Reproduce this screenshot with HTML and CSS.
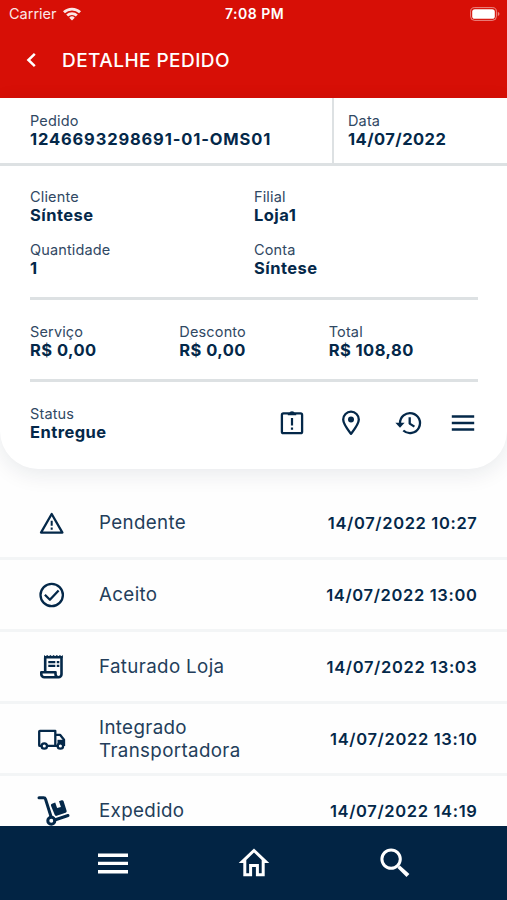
FILE: index.html
```html
<!DOCTYPE html>
<html lang="pt-BR">
<head>
<meta charset="utf-8">
<meta name="viewport" content="width=device-width, initial-scale=1">
<title>Detalhe Pedido</title>
<link rel="stylesheet" href="styles.css">
</head>
<body>
<div class="app">
  <header class="header">
    <div class="statusbar">
      <div class="carrier"><span>Carrier</span>
        <svg class="wifi" viewBox="0 0 18 14"><path d="M0 4.3A13 13 0 0 1 18 4.3L16.1 6.3A10.3 10.3 0 0 0 1.9 6.3ZM3.2 7.6A8.4 8.4 0 0 1 14.8 7.6L12.9 9.5A5.7 5.7 0 0 0 5.1 9.5ZM6.2 10.7A4 4 0 0 1 11.8 10.7L9 13.6Z"/></svg>
      </div>
      <div class="clock">7:08 PM</div>
      <svg class="battery" viewBox="0 0 30 14"><rect class="shell" x=".6" y=".6" width="25.8" height="12.8" rx="4"/><rect x="2.2" y="2.2" width="22.6" height="9.6" rx="2.6"/><path class="tip" d="M27.8 4.8Q31.2 7 27.8 9.2Z"/></svg>
    </div>
    <div class="titlebar">
      <svg class="back" viewBox="0 0 12 18"><path d="M9.8 2.8 3.4 9l6.4 6.2"/></svg>
      <h1>DETALHE PEDIDO</h1>
    </div>
  </header>

  <section class="card">
    <div class="order">
      <div class="field order-id"><span class="label">Pedido</span><strong class="long">1246693298691-01-OMS01</strong></div>
      <div class="field order-date"><span class="label">Data</span><strong>14/07/2022</strong></div>
    </div>
    <div class="block info">
      <div class="field"><span class="label">Cliente</span><strong>Síntese</strong></div>
      <div class="field"><span class="label">Filial</span><strong>Loja1</strong></div>
      <div class="field"><span class="label">Quantidade</span><strong>1</strong></div>
      <div class="field"><span class="label">Conta</span><strong>Síntese</strong></div>
    </div>
    <div class="block totals">
      <div class="field"><span class="label">Serviço</span><strong>R$ 0,00</strong></div>
      <div class="field"><span class="label">Desconto</span><strong>R$ 0,00</strong></div>
      <div class="field"><span class="label">Total</span><strong>R$ 108,80</strong></div>
    </div>
    <div class="state">
      <div class="field"><span class="label">Status</span><strong>Entregue</strong></div>
      <div class="actions">
        <svg viewBox="0 0 30 30"><rect class="line" x="4.900" y="5.400" width="20.200" height="19.800" rx="1.500"/><path d="M10.800 5.500h1.300a3 3 0 0 1 5.800 0h1.300v1.800h-8.400ZM13.900 10h2.200v7.400h-2.200ZM13.900 19.400h2.200v2.300h-2.200Z"/></svg>
        <svg viewBox="0 0 30 30"><path class="line" d="M15 25.800C10.500 20 7.200 16 7.200 11.500a7.800 7.800 0 0 1 15.600 0C22.800 16 19.500 20 15 25.800Z"/><circle cx="15" cy="11.500" r="3"/></svg>
        <svg viewBox="0 0 30 30"><path class="line" d="M6 15.400A10 10 0 1 1 9.300 22.500M15.700 9.300v6.300l4.700 3"/><path d="M1.400 14.800h9.200L6 19.700Z"/></svg>
        <svg viewBox="0 0 30 30"><path d="M3.800 7.300h22.400v2.400H3.800ZM3.800 13.800h22.400v2.400H3.800ZM3.800 20.300h22.400v2.400H3.800Z"/></svg>
      </div>
    </div>
  </section>

  <ul class="timeline">
    <li><svg viewBox="0 0 36 36"><path class="line" d="M17.700 9 28.400 27.600H7Z"/><path d="M16.700 15.800h2v5h-2ZM16.700 22.500h2v2.300h-2Z"/></svg><span>Pendente</span><time>14/07/2022 10:27</time></li>
    <li><svg viewBox="0 0 36 36"><circle class="line" cx="17.700" cy="18" r="11.200"/><path class="line" d="m10.900 17.800 5 5 8.700-9.300"/></svg><span>Aceito</span><time>14/07/2022 13:00</time></li>
    <li><svg viewBox="0 0 36 36"><path class="line heavy" d="M11.200 23V8.500M10.500 8.300H28.500M27.500 8.500v16.700a3 3 0 0 1-3 3H10.300a3 3 0 0 1-3-3v-2H21.500v2a3 3 0 0 0 3 3"/><path d="M10 9V6l1.600 1.300L13.200 6l1.600 1.300L16.400 6 18 7.300 19.600 6l1.600 1.300L22.800 6l1.600 1.300L26 6l1.300 1.300L28.800 6v3ZM14.300 12h7v2.200h-7ZM22.800 12h2.500v2.200h-2.500ZM14.300 15.800h7V18h-7ZM22.800 15.800h2.500V18h-2.500Z"/></svg><span>Faturado Loja</span><time>14/07/2022 13:03</time></li>
    <li><svg viewBox="0 0 36 36"><path class="line" d="M8.300 24.900H5.900a.7.700 0 0 1-.7-.7V10.600a.7.700 0 0 1 .7-.7h15.400v15H13M26 24.900h-5M21.300 13.800h4.700l4 5v6.100"/><path d="M23.500 18.800H31v5.200h-7.500Z"/><circle class="line fill" cx="10.300" cy="25" r="2.700"/><circle class="line fill" cx="26.400" cy="25" r="2.700"/></svg><span>Integrado<br>Transportadora</span><time>14/07/2022 13:10</time></li>
    <li><svg viewBox="0 0 36 36"><path class="cart" d="M5 4.700h4.600a2 2 0 0 1 1.900 1.400l5.500 17.400M20.700 27 34 22.500"/><circle class="cart" cx="17.300" cy="27.700" r="3.500"/><path d="m18 10.700 3.200-1.200 1.900 5.600 3.800-1.200L25 8.300l2.600-1a1.600 1.600 0 0 1 2 1l3 9.500a1.600 1.600 0 0 1-1 2l-8.900 3a1.600 1.600 0 0 1-2-1L17 12.700a1.600 1.600 0 0 1 1-2Z"/></svg><span>Expedido</span><time>14/07/2022 14:19</time></li>
  </ul>

  <nav class="tabs">
    <svg viewBox="0 0 36 36"><path d="M3 8.500h30v3.400H3ZM3 16.700h30v3.400H3ZM3 25h30v3.400H3Z"/></svg>
    <svg viewBox="0 0 36 36"><path d="M18 3.500 33.300 18h-4.600v13.200H19.900v-9.200h-3.800v9.200H7.300V18H2.700ZM18 7.600l-7.700 7.300v13.300h2.800V19h9.800v9.200h2.800V14.900Z"/></svg>
    <svg viewBox="0 0 36 36"><circle class="lens" cx="14.100" cy="14.100" r="9.200"/><path d="m20.500 22.900 2.400-2.400 9.500 8.600-2.900 2.900Z"/></svg>
  </nav>
</div>
</body>
</html>
```

FILE: styles.css
```css
* { box-sizing: border-box; }
body { margin: 0; background: #fefefe; color: #042849; font-family: Inter, sans-serif; }
h1, ul { margin: 0; padding: 0; }
svg { display: block; flex: none; fill: currentColor; }
.app { height: 900px; display: flex; flex-direction: column; overflow: hidden; }

.header { flex: none; height: 98px; background: #d70f06; color: #fff; }
.statusbar { height: 27px; padding: 0 7px 0 9px; display: grid; grid-template-columns: 1fr auto 1fr; align-items: center; font-size: 14.5px; }
.carrier { display: flex; align-items: center; gap: 6px; opacity: .9; }
.wifi { width: 18px; height: 14px; }
.clock { font-weight: 600; font-size: 14px; letter-spacing: .5px; }
.battery { width: 30px; height: 14px; justify-self: end; }
.battery .shell { fill: none; stroke: #fff; stroke-opacity: .5; stroke-width: 1; }
.battery .tip { opacity: .5; }
.titlebar { height: 66px; padding-left: 25px; display: flex; align-items: center; gap: 25px; }
.back { width: 12px; height: 18px; fill: none; stroke: #fff; stroke-width: 2.5; }
h1 { font-size: 19px; font-weight: 500; line-height: 24px; letter-spacing: .45px; padding-top: 1px; }

.card { position: relative; z-index: 1; flex: none; height: 371px; background: #fff; border-radius: 0 0 38px 38px; box-shadow: 0 5px 22px rgba(10, 30, 50, .09); }
.order { height: 68px; display: flex; border-bottom: 3px solid #dde1e3; }
.field { display: flex; flex-direction: column; }
.label { font-size: 14.5px; line-height: 19px; letter-spacing: .15px; color: #304863; }
strong { font-size: 16.500px; line-height: 19px; font-weight: 700; letter-spacing: .45px; }
.long { letter-spacing: .85px; }
.order-id { width: 334px; padding: 13px 0 0 30px; border-right: 2px solid #dde1e3; }
.order-date { padding: 13px 0 0 14px; }
.block { margin: 0 29px 0 30px; border-bottom: 3px solid #dde1e3; }
.info { height: 134px; padding-top: 21px; display: grid; grid-template-columns: 1fr 1fr; grid-auto-rows: 53px; }
.totals { height: 82px; padding-top: 22px; display: grid; grid-template-columns: repeat(3, 1fr); }
.state { padding: 22px 29px 0 30px; display: flex; justify-content: space-between; }
.actions { display: flex; gap: 28.500px; }
.actions svg { width: 30px; height: 30px; margin-top: 4px; }
.actions svg:last-child { margin-left: -4.500px; }
.line { fill: none; stroke: currentColor; stroke-width: 2.300; stroke-linejoin: round; }
.line.fill { fill: #fff; }
.line.heavy { stroke-width: 2.600; }

.timeline { flex: 1; min-height: 0; padding-top: 19px; list-style: none; overflow: hidden; }
.timeline li { height: 72px; padding: 0 30px 0 34px; display: flex; align-items: center; border-bottom: 3px solid #f3f5f6; }
.timeline svg { width: 36px; height: 36px; }
.timeline span { margin-left: 29px; font-size: 18.750px; line-height: 23px; letter-spacing: .35px; color: #243e5b; }
.timeline time { margin-left: auto; font-size: 16.500px; font-weight: 600; letter-spacing: .65px; margin-right: -.5px; white-space: nowrap; }
.cart { fill: none; stroke: currentColor; stroke-width: 3; stroke-linecap: round; }

.tabs { position: relative; flex: none; height: 74px; padding: 0 94px 0 95px; display: flex; justify-content: space-between; align-items: center; background: #022444; color: #fff; }
.tabs svg { width: 36px; height: 36px; }
.lens { fill: none; stroke: currentColor; stroke-width: 3; }
```
